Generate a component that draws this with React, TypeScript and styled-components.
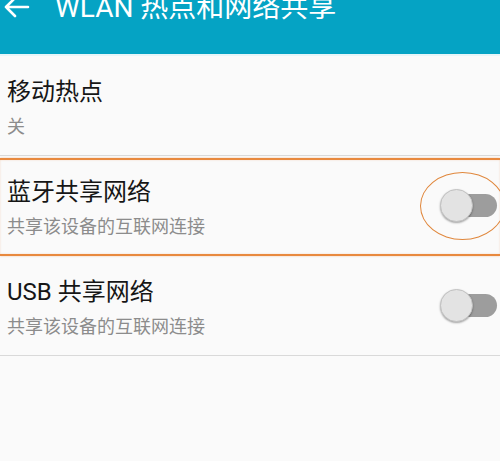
import React from 'react'
import styled, { createGlobalStyle } from 'styled-components'

const GlobalStyle = createGlobalStyle`
    html, body {
        margin:0;
        padding:0;
        background:#fafafa;
    }
    body {
        font-family: Roboto, "Noto Sans CJK SC", sans-serif;
    }
`

const Page = styled.div`
    width:500px;
    height:461px;
    overflow:hidden;
    background:#fafafa;
`

const Header = styled.div`
    height:56px;
    background:#05a3c4;
    border-bottom:2px solid #e6f5f8;
    display:flex;
    align-items:flex-start;
    box-sizing:border-box;
    overflow:hidden;
`

const BackIcon = styled.svg`
    width:26px;
    height:20px;
    margin-left:4px;
    margin-top:-2px;
    flex-shrink:0;
`

const Title = styled.div`
    font-size:28px;
    line-height:28px;
    margin-top:-6px;
    margin-left:25px;
    color:#ffffff;
    white-space:nowrap;
`

const Row = styled.div<{ $highlight?: boolean }>`
    position:relative;
    height:100px;
    box-sizing:border-box;
    border-bottom:1px solid #d9d9d9;
    display:flex;
    align-items:center;
    padding:0 3px 0 7px;
    ${p => p.$highlight ? `
        &::before {
            content:'';
            position:absolute;
            left:0;
            right:0;
            top:2px;
            bottom:-1px;
            border-top:2px solid #e8893e;
            border-bottom:2px solid #e8893e;
            box-shadow:0 0 2px rgba(232,137,62,0.4), inset 0 0 2px rgba(232,137,62,0.3);
            pointer-events:none;
        }
    ` : ''}
`

const TextBlock = styled.div`
    flex:1;
    display:flex;
    flex-direction:column;
    align-self:flex-start;
    padding-top:21px;
`

const ItemTitle = styled.div`
    font-size:24px;
    line-height:30px;
    color:#161616;
`

const ItemSub = styled.div`
    font-size:18px;
    line-height:22px;
    margin-top:9px;
    color:#8c8c8c;
`

const SwitchWrap = styled.div<{ $circled?: boolean }>`
    position:relative;
    width:57px;
    height:33px;
    display:flex;
    align-items:center;
    ${p => p.$circled ? `
        &::after {
            content:'';
            position:absolute;
            left:-20px;
            top:-17px;
            width:85px;
            height:68px;
            box-sizing:border-box;
            border:1.5px solid #e0873c;
            border-radius:50%;
            pointer-events:none;
        }
    ` : ''}
`

const Track = styled.div`
    position:absolute;
    left:5px;
    right:0;
    top:5px;
    height:23px;
    border-radius:12px;
    background:#9d9d9d;
`

const Knob = styled.div`
    position:relative;
    width:33px;
    height:33px;
    box-sizing:border-box;
    border-radius:50%;
    background:#e3e3e3;
    border:1px solid #c2c2c2;
    box-shadow:0 1px 2px rgba(0,0,0,0.35);
`

const Switch: React.FC<{ circled?: boolean }> = ({ circled }) => {
    return <SwitchWrap $circled={circled}>
        <Track />
        <Knob />
    </SwitchWrap>
}

const items = [
    { title: '移动热点', sub: '关', toggle: false, highlight: false },
    { title: '蓝牙共享网络', sub: '共享该设备的互联网连接', toggle: true, highlight: true },
    { title: 'USB 共享网络', sub: '共享该设备的互联网连接', toggle: true, highlight: false },
]

const App: React.FC = () => {
    return <Page>
        <GlobalStyle />
        <Header>
            <BackIcon viewBox="0 0 26 20">
                <path d="M2 9 H24 M11 0 L2 9 L11 18" stroke="#ffffff" strokeWidth="2.6" fill="none" strokeLinecap="round" strokeLinejoin="round" />
            </BackIcon>
            <Title>WLAN 热点和网络共享</Title>
        </Header>
        {items.map((item, i) => {
            return <Row key={i} $highlight={item.highlight}>
                <TextBlock>
                    <ItemTitle>{item.title}</ItemTitle>
                    <ItemSub>{item.sub}</ItemSub>
                </TextBlock>
                {item.toggle && <Switch circled={item.highlight} />}
            </Row>
        })}
    </Page>
}

export default App
